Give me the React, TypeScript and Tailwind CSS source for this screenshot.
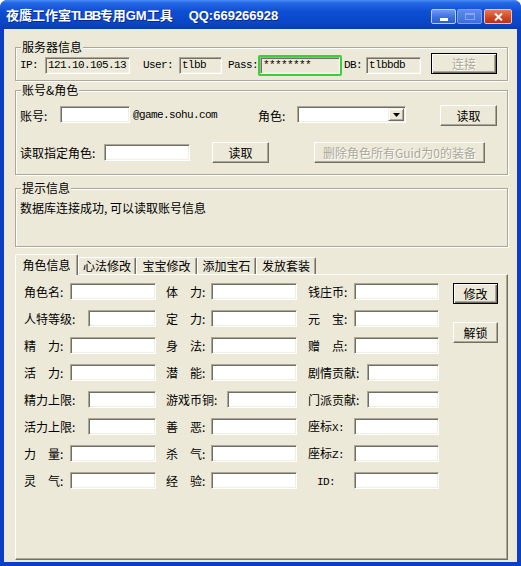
import React from 'react';
import clsx from 'clsx';

const MONO = "font-['Liberation_Mono',monospace] text-[11px] tracking-[-0.6px]";

type BoxProps = { className?: string; children?: React.ReactNode };

// sunken edit box, classic 3D look
function Edit({ className, children, readOnly, mono }: BoxProps & { readOnly?: boolean; mono?: boolean }) {
  return (
    <div
      className={clsx(
        'h-[17px] shrink-0 flex items-center pl-[2px] overflow-hidden whitespace-nowrap border border-t-[#aca899] border-l-[#aca899] border-b-white border-r-white shadow-[inset_1px_1px_0_#716f64,inset_-1px_-1px_0_#f1efe2]',
        readOnly ? 'bg-[#ece9d8]' : 'bg-white',
        mono && MONO,
        className,
      )}
    >
      {children}
    </div>
  );
}

function Btn({ className, children, isDefault, disabled }: BoxProps & { isDefault?: boolean; disabled?: boolean }) {
  return (
    <button
      type="button"
      className={clsx(
        'h-[21px] shrink-0 flex items-center justify-center bg-[#ece9d8] leading-none',
        isDefault
          ? 'border border-black shadow-[inset_1px_1px_0_#fff,inset_-1px_-1px_0_#716f64,inset_-2px_-2px_0_#aca899]'
          : 'border border-t-white border-l-white border-b-[#716f64] border-r-[#716f64] shadow-[inset_-1px_-1px_0_#aca899]',
        disabled ? 'text-[#aca899] [text-shadow:1px_1px_0_#fff]' : 'text-black',
        className,
      )}
    >
      {children}
    </button>
  );
}

function Group({ title, className, children }: BoxProps & { title: string }) {
  return (
    <fieldset
      className={clsx(
        'ml-[11px] w-[493px] shrink-0 border border-[#aca899] shadow-[inset_1px_1px_0_#fff,1px_1px_0_#fff] px-[4px]',
        className,
      )}
    >
      <legend className="ml-[1px] px-[1px] bg-[#ece9d8] leading-[14px]">{title}</legend>
      {children}
    </fieldset>
  );
}

function Combo({ className }: BoxProps) {
  return (
    <Edit className={clsx('pl-0 justify-end pr-[1px]', className)}>
      <div className="w-[16px] h-[13px] flex items-center justify-center bg-[#ece9d8] border border-t-[#f1efe2] border-l-[#f1efe2] border-b-[#716f64] border-r-[#716f64] shadow-[inset_1px_1px_0_#fff,inset_-1px_-1px_0_#aca899]">
        <svg width="7" height="4" viewBox="0 0 7 4">
          <path d="M0 0h7L3.5 4z" fill="black" />
        </svg>
      </div>
    </Edit>
  );
}

type Field = { label: React.ReactNode; w: string; pad?: string };

const rows: Field[][] = [
  [{ label: '角色名:', w: 'w-[86px]' }, { label: '体　力:', w: 'w-[86px]' }, { label: '钱庄币:', w: 'w-[85px]' }],
  [{ label: '人特等级:', w: 'w-[68px]' }, { label: '定　力:', w: 'w-[86px]' }, { label: '元　宝:', w: 'w-[85px]' }],
  [{ label: '精　力:', w: 'w-[86px]' }, { label: '身　法:', w: 'w-[86px]' }, { label: '赠　点:', w: 'w-[85px]' }],
  [{ label: '活　力:', w: 'w-[86px]' }, { label: '潜　能:', w: 'w-[86px]' }, { label: '剧情贡献:', w: 'w-[72px]' }],
  [{ label: '精力上限:', w: 'w-[68px]' }, { label: '游戏币铜:', w: 'w-[70px]' }, { label: '门派贡献:', w: 'w-[72px]' }],
  [
    { label: '活力上限:', w: 'w-[68px]' },
    { label: '善　恶:', w: 'w-[86px]' },
    { label: <>座标<span className={MONO}>X:</span></>, w: 'w-[85px]' },
  ],
  [
    { label: '力　量:', w: 'w-[86px]' },
    { label: '杀　气:', w: 'w-[86px]' },
    { label: <>座标<span className={MONO}>Z:</span></>, w: 'w-[85px]' },
  ],
  [
    { label: '灵　气:', w: 'w-[86px]' },
    { label: '经　验:', w: 'w-[86px]' },
    { label: <span className={MONO}>ID:</span>, w: 'w-[85px]', pad: 'pl-[9px]' },
  ],
];

const cellClass = ['w-[142px] pr-[10px]', 'w-[142px] pr-[11px]', 'w-[131px]'];

const tabs = [
  { name: '心法修改', w: 'w-[58px]' },
  { name: '宝宝修改', w: 'w-[61px]' },
  { name: '添加宝石', w: 'w-[59px]' },
  { name: '发放套装', w: 'w-[60px]' },
];

function TitleBar() {
  return (
    <div className="h-[29px] shrink-0 flex items-start pl-[6px] pr-[9px] rounded-t-[7px] bg-[linear-gradient(180deg,#4a8ef6_0%,#2466e3_10%,#0d4fd3_40%,#0a46c6_80%,#0a3cb0_100%)]">
      <div className="mt-[7px] leading-[17px] text-[13px] font-bold text-white whitespace-nowrap font-['Liberation_Sans','Noto_Sans_CJK_SC',sans-serif] [text-shadow:1px_1px_0_#0a2a8a]">
        夜鹰工作室<span className="tracking-[-1.5px]">TLBB</span>专用GM工具
        <span className="ml-[16px]">QQ:669266928</span>
      </div>
      <div className="ml-auto mt-[9px] flex">
        <div className="w-[25px] h-[15px] rounded-[2px] border border-[#b9cdf5] bg-[linear-gradient(180deg,#6d9bf3,#3a6ddb_60%,#2f5fcf)] flex items-end justify-center pb-[2px]">
          <div className="w-[8px] h-[3px] bg-white" />
        </div>
        <div className="w-[25px] h-[15px] ml-px rounded-[2px] border border-[#7f9fe6] bg-[linear-gradient(180deg,#5e8ced,#3e6ed8)] flex items-center justify-center">
          <div className="w-[10px] h-[7px] border border-t-2 border-[#86a6ea]" />
        </div>
        <div className="w-[28px] h-[15px] ml-[2px] rounded-[2px] border border-[#f0c0b4] bg-[linear-gradient(180deg,#e8775a,#cf4424_60%,#b8341a)] flex items-center justify-center">
          <svg width="9" height="8" viewBox="0 0 9 8">
            <path d="M1 0.5L8 7.5M8 0.5L1 7.5" stroke="white" strokeWidth="2" />
          </svg>
        </div>
      </div>
    </div>
  );
}

export default function App() {
  return (
    <div className="w-[521px] h-[566px] bg-white text-[12px] text-black font-['Noto_Sans_CJK_SC',sans-serif]">
      <div className="w-full h-full flex flex-col rounded-t-[8px] bg-[#0a3fc3]">
        <TitleBar />
        <div className="flex-1 mx-[4px] mb-[4px] bg-[#ece9d8] flex flex-col">
          {/* server connection */}
          <Group title="服务器信息" className="mt-[11px] h-[41px]">
            <div className="-mt-px h-[21px] flex items-start">
              <span className={clsx(MONO, 'w-[25px] mt-[4px] leading-[17px]')}>IP:</span>
              <Edit readOnly mono className="w-[85px] mt-[4px]">121.10.105.13</Edit>
              <span className={clsx(MONO, 'ml-[13px] w-[36px] mt-[4px] leading-[17px]')}>User:</span>
              <Edit readOnly mono className="w-[43px] mt-[4px]">tlbb</Edit>
              <span className={clsx(MONO, 'ml-[6px] w-[30px] mt-[4px] leading-[17px]')}>Pass:</span>
              <div className="w-[84px] h-[21px] mt-[2px] border-2 border-[#3ccf3c] rounded-[2px]">
                <Edit readOnly mono className="w-full h-full pl-[1px]">********</Edit>
              </div>
              <span className={clsx(MONO, 'ml-[2px] w-[22px] mt-[4px] leading-[17px]')}>DB:</span>
              <Edit readOnly mono className="w-[55px] mt-[4px]">tlbbdb</Edit>
              <Btn isDefault disabled className="ml-[10px] w-[66px]">连接</Btn>
            </div>
          </Group>

          {/* account & role */}
          <Group title="账号&角色" className="mt-[2px] h-[92px]">
            <div className="mt-[8px] h-[21px] flex items-start">
              <span className="w-[40px] mt-[2px] leading-[17px]">账号:</span>
              <Edit className="w-[70px] mt-[1px]" />
              <span className={clsx(MONO, 'ml-[3px] w-[125px] mt-[2px] leading-[17px]')}>@game.sohu.com</span>
              <span className="w-[39px] mt-[2px] leading-[17px]">角色:</span>
              <Combo className="w-[109px] mt-[1px]" />
              <Btn className="ml-[34px] w-[57px]">读取</Btn>
            </div>
            <div className="mt-[16px] h-[21px] flex items-start">
              <span className="w-[84px] mt-[2px] leading-[17px]">读取指定角色:</span>
              <Edit className="w-[86px] mt-[2px]" />
              <Btn className="ml-[22px] w-[57px]">读取</Btn>
              <Btn disabled className="ml-[45px] w-[171px]">删除角色所有Guid为0的装备</Btn>
            </div>
          </Group>

          {/* status message */}
          <Group title="提示信息" className="mt-[6px] h-[66px]">
            <div className="mt-[4px] leading-[17px]">数据库连接成功, 可以读取账号信息</div>
          </Group>

          {/* tab control */}
          <div className="ml-[11px] w-[493px] mt-[7px] shrink-0">
            <div className="h-[20px] flex items-end">
              <div className="relative z-10 -mb-px w-[63px] h-[21px] flex items-center justify-center bg-[#ece9d8] border-t border-l border-t-white border-l-white border-r border-r-[#716f64] rounded-t-[2px] shadow-[inset_-1px_0_0_#aca899]">
                角色信息
              </div>
              {tabs.map(t => (
                <div
                  key={t.name}
                  className={clsx(
                    t.w,
                    'h-[17px] flex items-center justify-center border-t border-l border-t-white border-l-white border-r border-r-[#716f64] rounded-t-[2px] shadow-[inset_-1px_0_0_#aca899]',
                  )}
                >
                  {t.name}
                </div>
              ))}
            </div>
            <div className="h-[286px] border border-t-white border-l-white border-b-[#716f64] border-r-[#716f64] shadow-[inset_-1px_-1px_0_#aca899] pt-[8px] pl-[8px] flex">
              <div className="flex flex-col gap-[10px]">
                {rows.map((row, i) => (
                  <div key={i} className="flex h-[17px]">
                    {row.map((f, j) => (
                      <div key={j} className={clsx('flex items-center', cellClass[j])}>
                        <span className={clsx('leading-[17px] whitespace-nowrap', f.pad)}>{f.label}</span>
                        <Edit className={clsx('ml-auto', f.w)} />
                      </div>
                    ))}
                  </div>
                ))}
              </div>
              <div className="ml-[14px] flex flex-col">
                <Btn isDefault className="w-[45px]">修改</Btn>
                <Btn className="w-[45px] mt-[18px]">解锁</Btn>
              </div>
            </div>
          </div>
        </div>
      </div>
    </div>
  );
}
